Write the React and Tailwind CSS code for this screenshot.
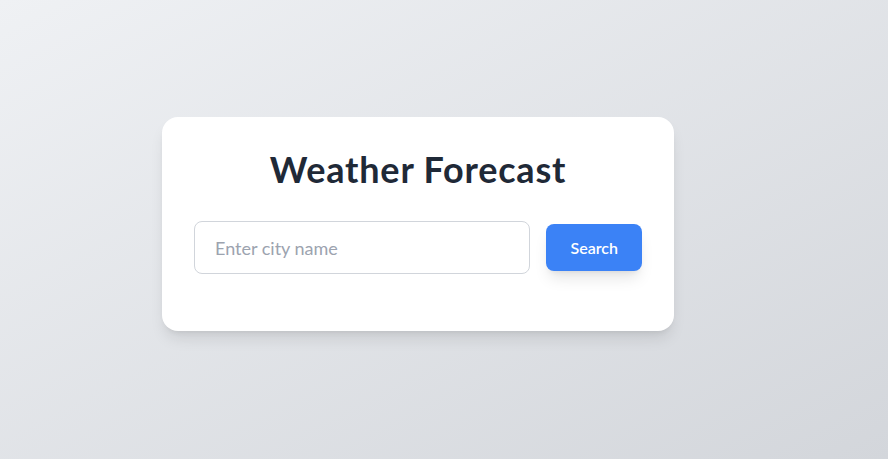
import React, { useState } from "react";

const App = () => {
  const [city, setCity] = useState("");

  return (
    <div className="min-h-screen w-full bg-gradient-to-br from-[#eff1f4] to-[#d3d6db] flex items-center justify-center pr-[52px] pb-[11px] font-['Lato','Open_Sans',sans-serif]">
      {/* Card */}
      <div className="w-[512px] bg-white rounded-2xl shadow-lg p-8 pb-[57px]">
        <h1 className="text-4xl font-bold text-[#1f2937] text-center tracking-[0.8px] mb-8">
          Weather Forecast
        </h1>

        <form
          className="flex items-center gap-4"
          onSubmit={(e) => e.preventDefault()}
        >
          <input
            type="text"
            value={city}
            onChange={(e) => setCity(e.target.value)}
            placeholder="Enter city name"
            className="flex-1 min-w-0 h-[53px] px-5 text-lg text-gray-800 placeholder-[#9ca3af] border border-[#d1d5db] rounded-lg outline-none"
          />
          <button
            type="submit"
            className="h-[47px] px-6 bg-[#3b82f6] text-white font-semibold rounded-lg shadow-lg"
          >
            Search
          </button>
        </form>
      </div>
    </div>
  );
};

export default App;
